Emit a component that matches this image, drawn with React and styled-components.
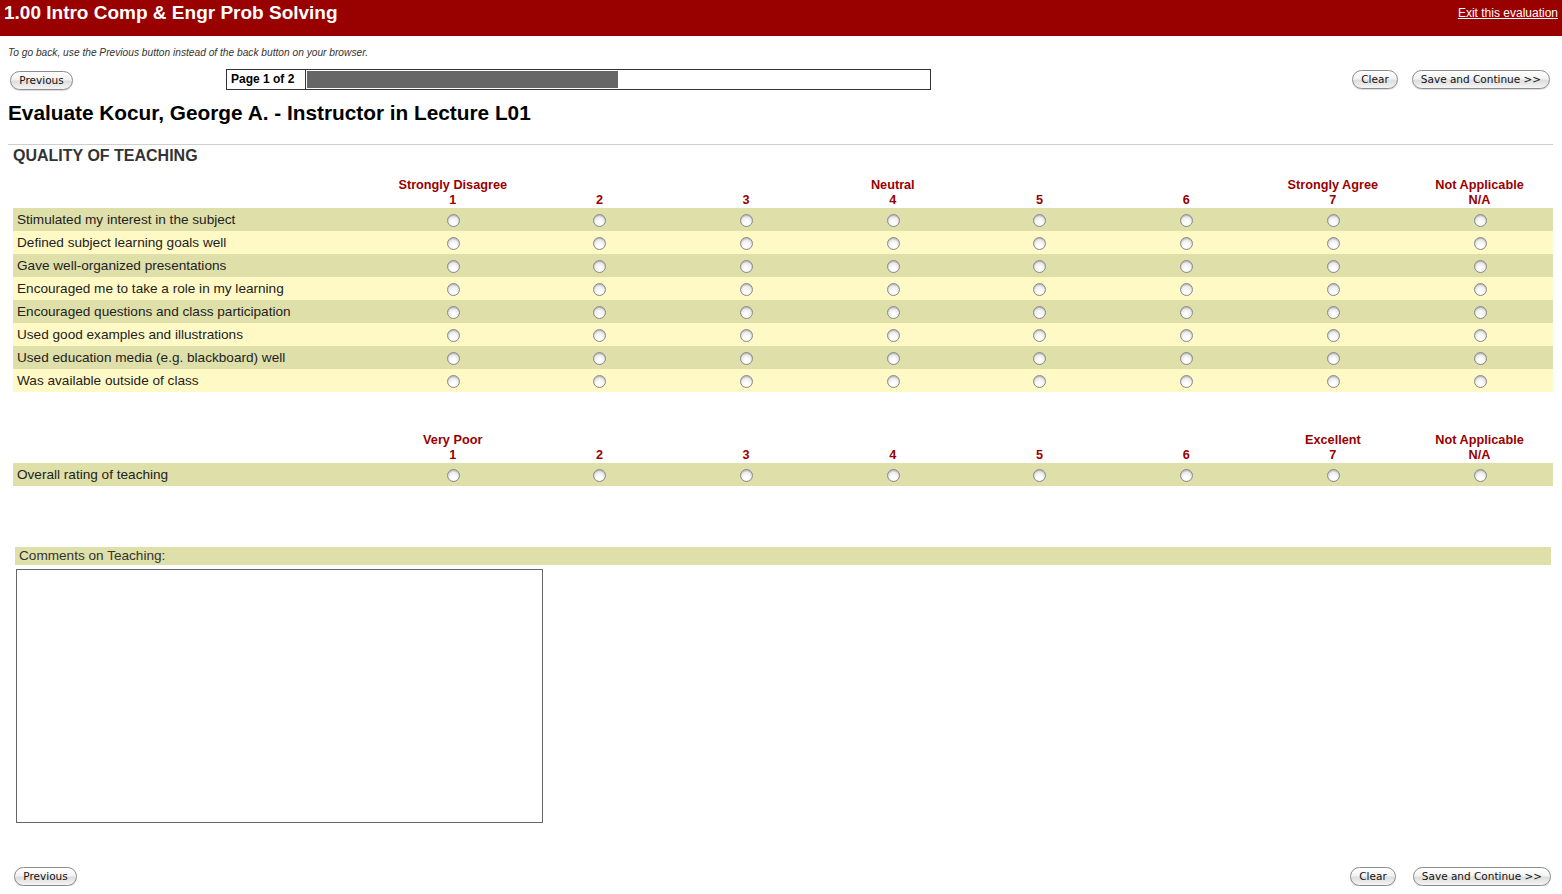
import React from "react";
import styled, { createGlobalStyle } from "styled-components";

const GlobalStyle = createGlobalStyle`
	body {
		margin: 0;
		background: #fff;
		font-family: "Liberation Sans", Arial, sans-serif;
		color: #222;
	}
`;

const TopBar = styled.div`
	height: 36px;
	background: #990000;
	display: flex;
	justify-content: space-between;
	align-items: flex-start;
	padding: 0 4px;
	box-sizing: border-box;
`;

const CourseTitle = styled.div`
	color: #fff;
	font-weight: bold;
	font-size: 19px;
	line-height: 22px;
	margin-top: 2px;
`;

const ExitLink = styled.a`
	color: #fff;
	font-size: 12px;
	text-decoration: underline;
	margin-top: 6px;
	cursor: pointer;
`;

const Page = styled.div`
	padding: 0 8px;
`;

const Note = styled.div`
	font-style: italic;
	font-size: 10.2px;
	color: #333;
	margin-top: 11px;
	line-height: 12px;
`;

const NavRow = styled.div`
	display: grid;
	grid-template-columns: 216px 705px 1fr auto;
	align-items: center;
	margin-top: ${p => p.$top || 0}px;
	padding-left: ${p => p.$left || 0}px;
	padding-right: ${p => p.$right || 0}px;
`;

const Button = styled.button`
	height: 19px;
	width: ${p => p.$w}px;
	padding: 0;
	border-radius: 10px;
	border: 1px solid #8c8c8c;
	background: linear-gradient(#ffffff, #f3f3f3 45%, #dedede 55%, #f4f4f4);
	box-shadow: inset 0 1px 1px rgba(255, 255, 255, 0.9), 0 1px 1px rgba(0, 0, 0, 0.15);
	font-family: "DejaVu Sans", "Liberation Sans", sans-serif;
	font-size: 10.5px;
	color: #111;
	line-height: 17px;
	cursor: pointer;
`;

const RightButtons = styled.div`
	grid-column: 4;
	display: flex;
	gap: ${p => p.$gap || 14}px;
`;

const ProgressBox = styled.div`
	display: flex;
	height: 21px;
	border: 1px solid #333;
	box-sizing: border-box;
	background: #fff;
`;

const PageLabel = styled.div`
	font-weight: bold;
	font-size: 12px;
	line-height: 19px;
	padding: 0 4px;
	width: 70px;
	border-right: 1px solid #333;
	color: #000;
	white-space: nowrap;
`;

const Track = styled.div`
	flex: 1;
	padding: 1px 2px 1px 1px;
`;

const Fill = styled.div`
	height: 100%;
	background: #666;
`;

const Heading = styled.h1`
	margin: 11px 0 0;
	font-size: 20.8px;
	line-height: 24px;
	font-weight: bold;
	color: #000;
`;

const Rule = styled.div`
	height: 1px;
	background: #cfcfcf;
	margin: 19px 0 0;
	width: 1545px;
`;

const Section = styled.div`
	padding-left: 5px;
`;

const SectionTitle = styled.div`
	font-weight: bold;
	font-size: 16px;
	color: #333;
	line-height: 20px;
	margin-top: 1px;
`;

const Grid = styled.div`
	display: grid;
	grid-template-columns: 366.4px repeat(8, 146.7px);
	width: 1540px;
	margin-top: ${p => p.$top}px;
`;

const HeadCell = styled.div`
	text-align: center;
	color: #990000;
	font-weight: bold;
	font-size: 12.7px;
	line-height: 15px;
`;

const RowLabel = styled.div`
	background: ${p => (p.$alt ? "#fff9c5" : "#dfdfa9")};
	font-size: 13.6px;
	line-height: 23px;
	height: 23px;
	padding-left: 4px;
	color: #222;
`;

const RadioCell = styled.div`
	background: ${p => (p.$alt ? "#fff9c5" : "#dfdfa9")};
	height: 23px;
	display: flex;
	align-items: center;
	justify-content: center;
`;

const Radio = styled.span`
	width: 11px;
	height: 11px;
	border-radius: 50%;
	border: 1px solid #8a8a8a;
	background: radial-gradient(circle at 50% 70%, #ffffff 20%, #e4e4e4 70%, #c8c8c8);
	box-shadow: inset 0 1px 1px rgba(0, 0, 0, 0.2);
	margin-top: 2px;
	margin-left: 1px;
`;

const CommentBar = styled.div`
	margin: 61px 0 0 7px;
	width: 1532px;
	background: #dfdfa9;
	height: 18px;
	font-size: 13.6px;
	line-height: 18px;
	padding-left: 4px;
	color: #333;
`;

const CommentBox = styled.textarea`
	display: block;
	margin: 4px 0 0 8px;
	width: 527px;
	height: 254px;
	box-sizing: border-box;
	border: 1px solid #666;
	resize: none;
`;

const questions = [
	"Stimulated my interest in the subject",
	"Defined subject learning goals well",
	"Gave well-organized presentations",
	"Encouraged me to take a role in my learning",
	"Encouraged questions and class participation",
	"Used good examples and illustrations",
	"Used education media (e.g. blackboard) well",
	"Was available outside of class",
];

const agreeScale = [
	["Strongly Disagree", "1"],
	["", "2"],
	["", "3"],
	["Neutral", "4"],
	["", "5"],
	["", "6"],
	["Strongly Agree", "7"],
	["Not Applicable", "N/A"],
];

const poorScale = [
	["Very Poor", "1"],
	["", "2"],
	["", "3"],
	["", "4"],
	["", "5"],
	["", "6"],
	["Excellent", "7"],
	["Not Applicable", "N/A"],
];

const RatingGrid = ({ scale, items, top }) => (
	<Grid $top={top}>
		<div />
		{scale.map(([label, num], i) => (
			<HeadCell key={i}>
				{label || "\u00a0"}
				<br />
				{num}
			</HeadCell>
		))}
		{items.map((q, r) => (
			<React.Fragment key={q}>
				<RowLabel $alt={r % 2 === 1}>{q}</RowLabel>
				{scale.map((_, c) => (
					<RadioCell key={c} $alt={r % 2 === 1}>
						<Radio />
					</RadioCell>
				))}
			</React.Fragment>
		))}
	</Grid>
);

const App = () => {
	return (
		<>
			<GlobalStyle />
			<TopBar>
				<CourseTitle>1.00 Intro Comp &amp; Engr Prob Solving</CourseTitle>
				<ExitLink>Exit this evaluation</ExitLink>
			</TopBar>
			<Page>
				<Note>To go back, use the Previous button instead of the back button on your browser.</Note>
				<NavRow $top={10} $left={2} $right={4}>
					<div>
						<Button $w={63}>Previous</Button>
					</div>
					<ProgressBox>
						<PageLabel>Page 1 of 2</PageLabel>
						<Track>
							<Fill style={{ width: "50%" }} />
						</Track>
					</ProgressBox>
					<RightButtons>
						<Button $w={46}>Clear</Button>
						<Button $w={138}>Save and Continue &gt;&gt;</Button>
					</RightButtons>
				</NavRow>
				<Heading>Evaluate Kocur, George A. - Instructor in Lecture L01</Heading>
				<Rule />
				<Section>
					<SectionTitle>QUALITY OF TEACHING</SectionTitle>
					<RatingGrid scale={agreeScale} items={questions} top={12} />
					<RatingGrid scale={poorScale} items={["Overall rating of teaching"]} top={41} />
				</Section>
				<CommentBar>Comments on Teaching:</CommentBar>
				<CommentBox />
				<NavRow $top={43} $left={6} $right={3}>
					<div>
						<Button $w={63}>Previous</Button>
					</div>
					<div />
					<RightButtons $gap={17}>
						<Button $w={46}>Clear</Button>
						<Button $w={138}>Save and Continue &gt;&gt;</Button>
					</RightButtons>
				</NavRow>
			</Page>
		</>
	);
};

export default App;
